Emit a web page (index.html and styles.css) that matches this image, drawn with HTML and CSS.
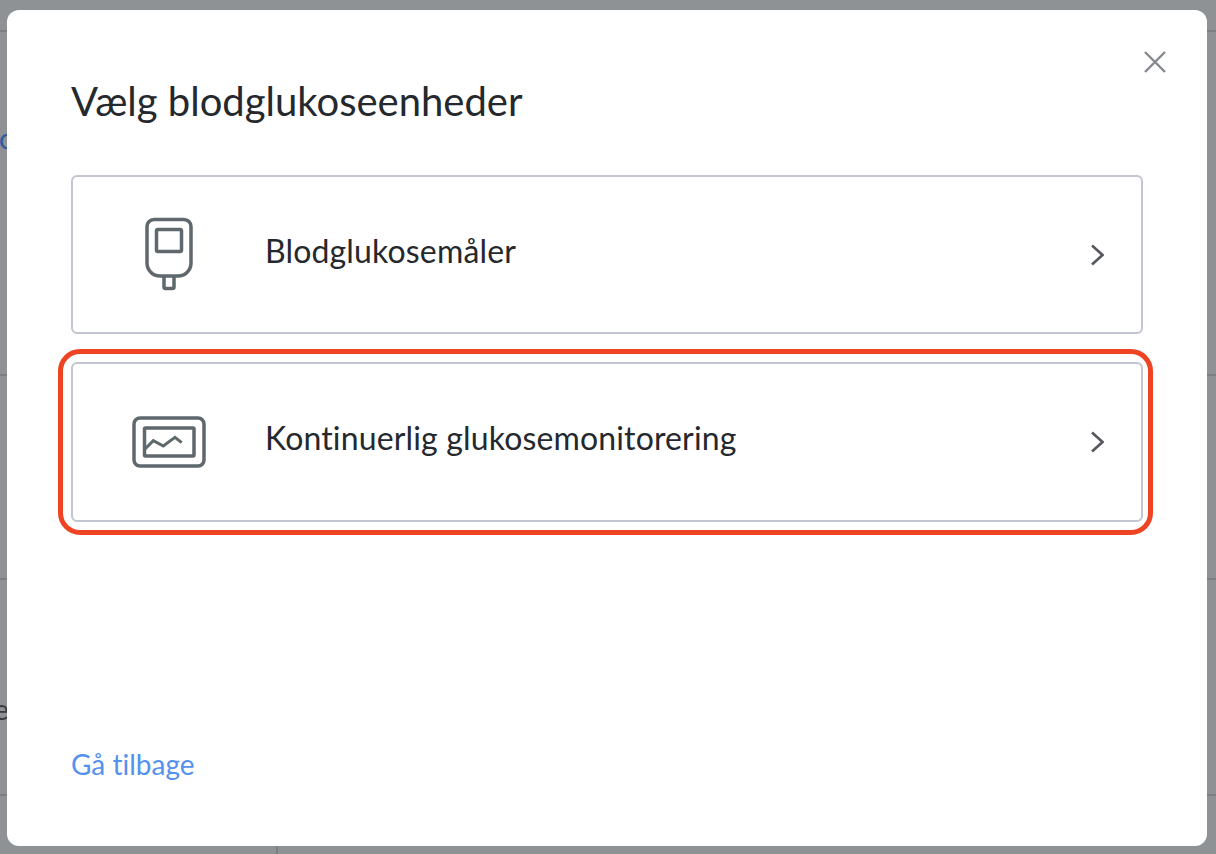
FILE: index.html
```html
<!DOCTYPE html>
<html lang="da">
<head>
<meta charset="utf-8">
<title>Vælg blodglukoseenheder</title>
<link rel="stylesheet" href="styles.css">
</head>
<body>
<div class="page">
  <div class="page-row page-row-top"></div>
  <div class="page-row page-row-link"><span class="page-link">c</span></div>
  <div class="page-row page-row-mid"></div>
  <div class="page-row page-row-text"><span class="page-text">e</span></div>
  <div class="page-row page-row-foot"><div class="page-col"></div></div>
</div>
<div class="modal">
  <button class="close" aria-label="Luk">
    <svg width="24" height="24" viewBox="0 0 24 24"><path d="M2 2 L22 22 M22 2 L2 22" class="close-path"/></svg>
  </button>
  <h1 class="title">Vælg blodglukoseenheder</h1>
  <div class="options">
    <div class="option">
      <div class="option-icon">
        <svg width="48" height="76" viewBox="0 0 48 76" class="icon-svg">
          <path d="M9 2.5 H39 A7 7 0 0 1 46 9.500 V46 A13 13 0 0 1 33 59 H15 A13 13 0 0 1 2 46 V9.500 A7 7 0 0 1 9 2.500 Z"/>
          <rect x="11.5" y="12.5" width="25" height="22" rx="1.500"/>
          <path d="M19 59 V70 A1.500 1.500 0 0 0 20.500 71.500 H27.500 A1.500 1.500 0 0 0 29 70 V59"/>
        </svg>
      </div>
      <span class="option-label">Blodglukosemåler</span>
      <svg class="chevron" width="14" height="22" viewBox="0 0 14 22"><path d="M2 1.500 L12.500 11 L2 20.500"/></svg>
    </div>
    <div class="option option-marked">
      <div class="option-icon">
        <svg width="74" height="52" viewBox="0 0 74 52" class="icon-svg">
          <rect x="2" y="2" width="70" height="48" rx="6"/>
          <rect x="12.500" y="12" width="49.500" height="28" rx="1"/>
          <path d="M13 33 L21.300 24.700 L31.300 30 L43 21.300 L49.700 26.700" class="icon-thin"/>
        </svg>
      </div>
      <span class="option-label">Kontinuerlig glukosemonitorering</span>
      <svg class="chevron" width="14" height="22" viewBox="0 0 14 22"><path d="M2 1.500 L12.500 11 L2 20.500"/></svg>
    </div>
  </div>
  <a class="back" href="#">Gå tilbage</a>
</div>
</body>
</html>
```
FILE: styles.css
```css
* { box-sizing: border-box; }
html, body { margin: 0; height: 100%; }
body {
  position: relative;
  width: 1216px;
  height: 854px;
  overflow: hidden;
  background: #8f9295;
  font-family: Lato, "Open Sans", sans-serif;
  font-variant-ligatures: none;
}
.page { height: 854px; }
.page-row { border-bottom: 2px solid #7b7f84; position: relative; }
.page-row-top { height: 32px; }
.page-row-link { height: 344px; }
.page-row-mid { height: 204px; }
.page-row-text { height: 216px; }
.page-row-foot { height: 58px; border-bottom: 0; }
.page-col { width: 278px; height: 58px; border-right: 2px solid #7b7f84; }
.page-link {
  display: block;
  white-space: nowrap;
  margin-left: -1px;
  padding-top: 89px;
  font-size: 28px;
  color: #2f5ba3;
}
.page-text {
  display: block;
  white-space: nowrap;
  margin-left: -6px;
  padding-top: 112px;
  font-size: 28px;
  color: #3a3d40;
}
.modal {
  position: absolute;
  left: 7px;
  top: 10px;
  width: 1200px;
  height: 836px;
  background: #fff;
  border-radius: 12px;
  padding: 165px 64px 0;
  display: flex;
  flex-direction: column;
}
.close {
  position: absolute;
  right: 40px;
  top: 40px;
  width: 24px;
  height: 24px;
  padding: 0;
  border: 0;
  background: none;
  display: flex;
}
.close-path { stroke: #85888c; stroke-width: 2.4; fill: none; }
.title {
  position: absolute;
  left: 64px;
  top: 67px;
  margin: 0;
  font-size: 40px;
  line-height: 48px;
  font-weight: 400;
  color: #25282d;
}
.options { display: flex; flex-direction: column; gap: 28px; }
.option {
  position: relative;
  height: 159px;
  border: 2px solid #c3c6d1;
  border-radius: 6px;
  display: flex;
  align-items: center;
  padding-right: 37px;
}
.option-marked { height: 160px; }
.option-marked::after {
  content: "";
  position: absolute;
  left: -15px;
  right: -12px;
  top: -15px;
  bottom: -15px;
  border: 5px solid #ee4423;
  border-radius: 22px;
}
.option-icon {
  width: 192px;
  flex: none;
  display: flex;
  justify-content: center;
}
.icon-svg { fill: none; stroke: #5f686c; stroke-width: 3.500; }
.icon-thin { stroke-width: 3; }
.option-label {
  flex: 1;
  font-size: 32px;
  line-height: 40px;
  letter-spacing: 0.15px;
  color: #25282d;
  margin-top: -8px;
}
.chevron { fill: none; stroke: #55585c; stroke-width: 2.600; flex: none; }
.back {
  position: absolute;
  left: 64px;
  top: 736px;
  font-size: 28px;
  line-height: 36px;
  color: #5591ee;
  text-decoration: none;
}
```
